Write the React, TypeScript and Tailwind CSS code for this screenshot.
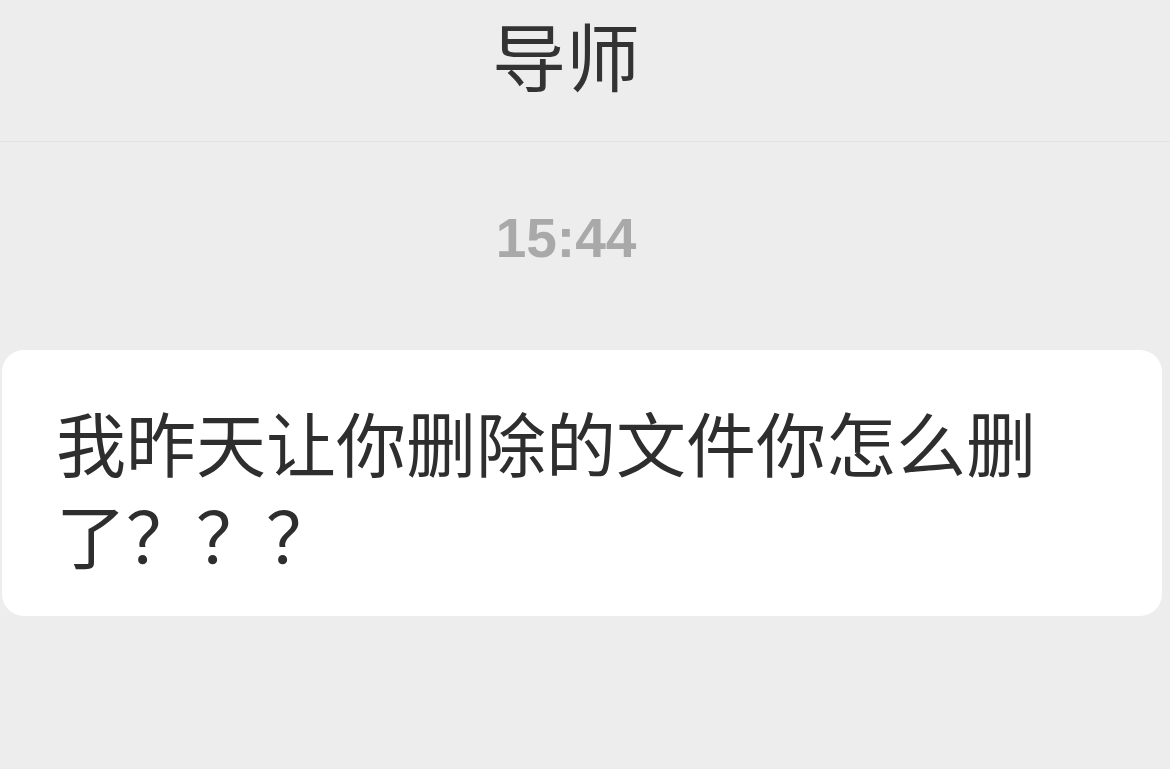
export default function App() {
  return (
    <div
      className="h-[769px] w-[1170px] overflow-hidden bg-[#ededed] text-[#2b2b2b]"
      style={{ fontFamily: '"Noto Sans CJK SC", "Noto Sans", sans-serif' }}
    >
      {/* Header */}
      <div className="flex h-[142px] items-start justify-center border-b border-[#e2e2e2] pt-[6px] pr-[38px]">
        <span className="text-[74px] leading-[96px] text-[#333]">导师</span>
      </div>

      {/* Time */}
      <div className="flex justify-center pt-[64px] pr-[38px]">
        <span
          className="text-[55px] font-bold leading-[64px] text-[#a9a9a9]"
          style={{ fontFamily: '"Liberation Sans", Arial, sans-serif' }}
        >
          15:44
        </span>
      </div>

      {/* Message bubble */}
      <div className="mt-[80px] ml-[2px] w-[1160px] rounded-[22px] bg-white pt-[46px] pb-[36px] pl-[54px] pr-[80px]">
        <p className="text-[70px] leading-[92px] text-[#2e2e2e]">
          我昨天让你删除的文件你怎么删了？？？
        </p>
      </div>
    </div>
  )
}
